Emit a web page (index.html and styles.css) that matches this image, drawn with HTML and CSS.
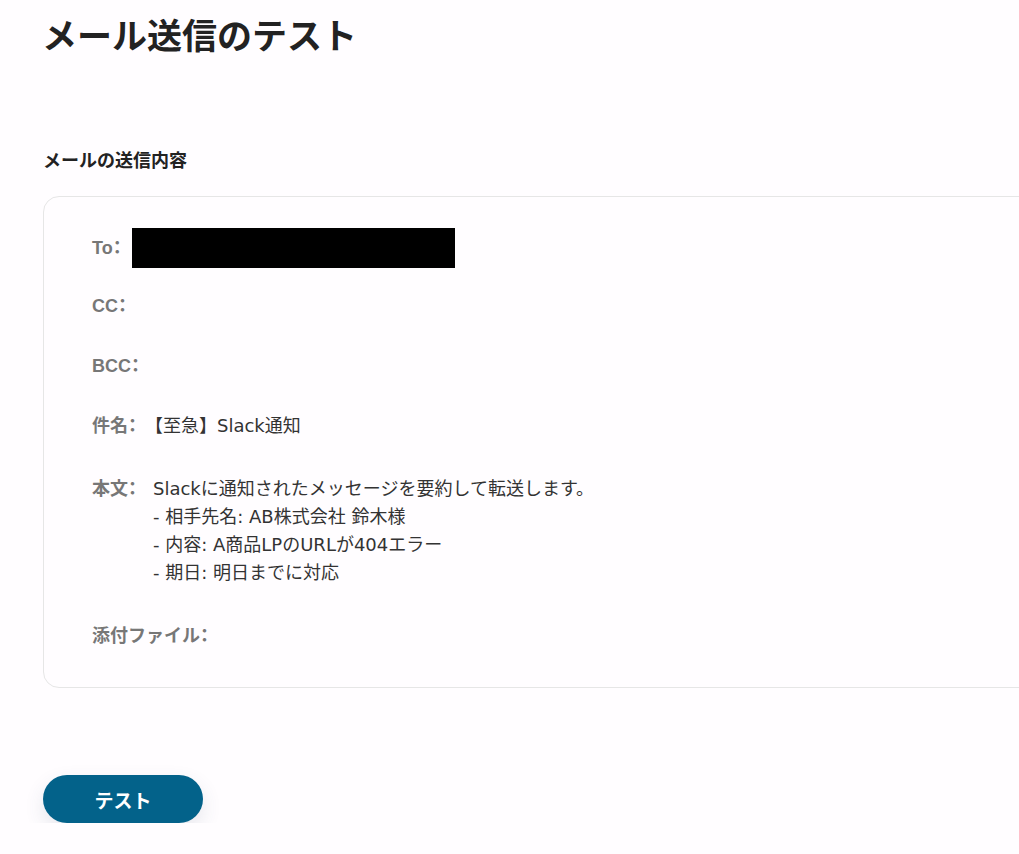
FILE: index.html
```html
<!DOCTYPE html>
<html lang="ja">
<head>
<meta charset="utf-8">
<title>メール送信のテスト</title>
<link rel="stylesheet" href="styles.css">
</head>
<body>
<main class="page">
  <h1 class="title">メール送信のテスト</h1>
  <h2 class="section-title">メールの送信内容</h2>
  <section class="card">
    <div class="row row-to">
      <span class="label">To：</span>
      <span class="redacted"></span>
    </div>
    <div class="row row-cc">
      <span class="label">CC：</span>
    </div>
    <div class="row row-bcc">
      <span class="label">BCC：</span>
    </div>
    <div class="row row-subject">
      <span class="label">件名：</span>
      <span class="value">【至急】Slack通知</span>
    </div>
    <div class="row row-body">
      <span class="label">本文：</span>
      <div class="value body-text">
        <div>Slackに通知されたメッセージを要約して転送します。</div>
        <div>- 相手先名: AB株式会社 鈴木様</div>
        <div>- 内容: A商品LPのURLが404エラー</div>
        <div>- 期日: 明日までに対応</div>
      </div>
    </div>
    <div class="row row-attach">
      <span class="label">添付ファイル：</span>
    </div>
  </section>
  <button class="test-button" type="button">テスト</button>
</main>
</body>
</html>
```

FILE: styles.css
```css
html, body {
  margin: 0;
  padding: 0;
  background: #fffdff;
}
body {
  font-family: "Liberation Sans", "Noto Sans CJK JP", sans-serif;
  color: #333;
  overflow: hidden;
}
.page {
  padding: 10px 0 0 43px;
  width: 1100px;
}
.title {
  margin: 0 0 0 -1px;
  font-size: 35px;
  line-height: 54px;
  font-weight: 700;
  color: #222;
}
.section-title {
  margin: 84px 0 0 0;
  font-size: 18px;
  line-height: 27px;
  font-weight: 700;
  color: #222;
}
.card {
  margin-top: 21px;
  border: 1px solid #e6e6e6;
  border-radius: 16px;
  padding: 31px 48px 37px 48px;
  background: #fffdff;
}
.row {
  display: flex;
  align-items: flex-start;
  font-size: 18px;
  line-height: 28px;
}
.label {
  font-weight: 700;
  color: #777;
  margin-right: 8px;
  font-feature-settings: "halt" 1;
}
.value {
  color: #333;
  font-family: "DejaVu Sans", "Noto Sans CJK JP", sans-serif;
}
.row-to {
  align-items: center;
  height: 40px;
}
.row-to .label {
  margin-right: 10px;
}
.row-body .label {
  margin-right: 16px;
}
.redacted {
  display: block;
  width: 323px;
  height: 40px;
  background: #000;
}
.row-cc { margin-top: 24px; }
.row-bcc { margin-top: 32px; }
.row-subject { margin-top: 32px; }
.row-body { margin-top: 35px; }
.row-attach { margin-top: 35px; }
.test-button {
  margin-top: 87px;
  width: 160px;
  height: 48px;
  border: none;
  border-radius: 24px;
  background: #03628a;
  color: #fff;
  font-family: "Liberation Sans", "Noto Sans CJK JP", sans-serif;
  font-size: 19px;
  font-weight: 700;
  box-shadow: 0 8px 20px rgba(60, 70, 110, 0.12);
  cursor: pointer;
}
```
